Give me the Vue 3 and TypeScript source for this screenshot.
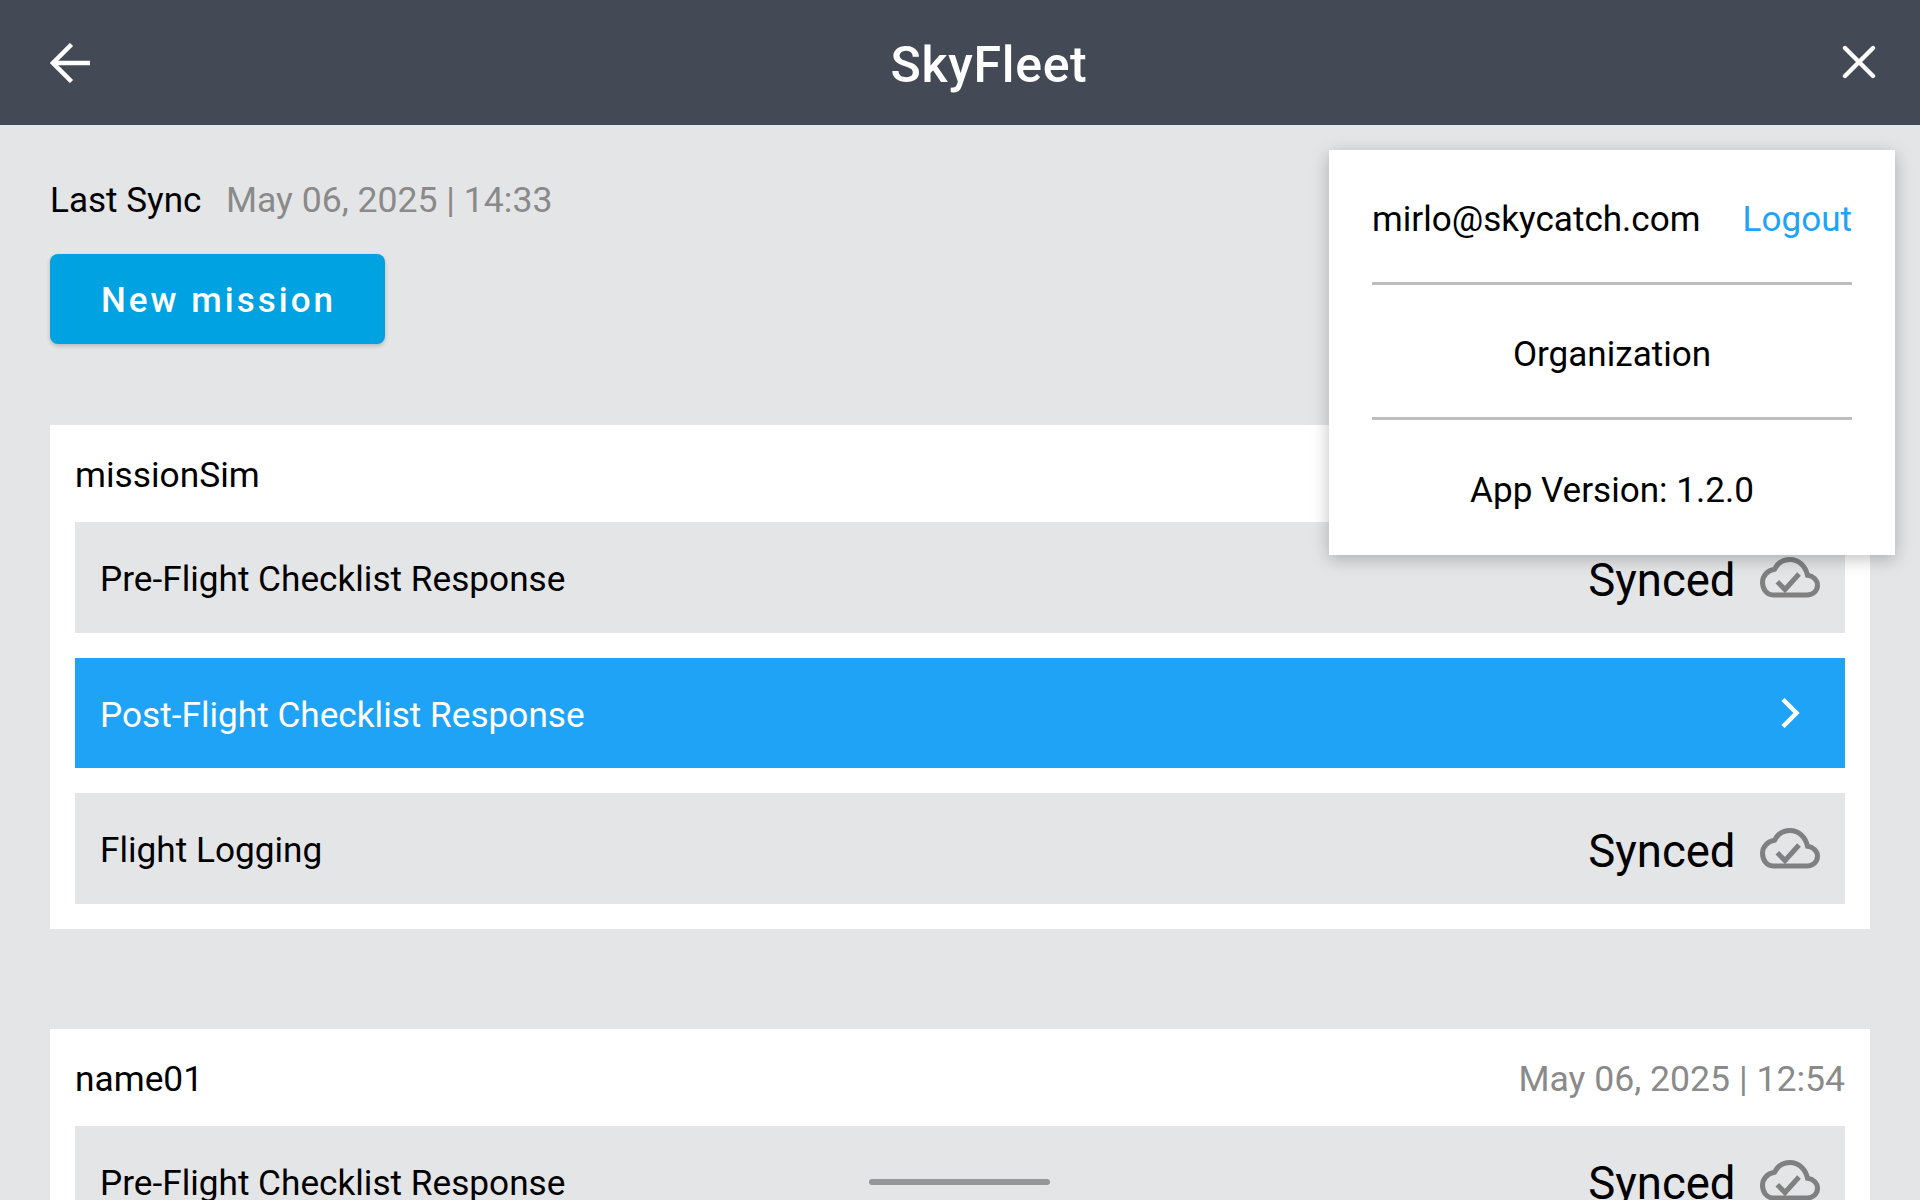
<script setup lang="ts">
interface Row { label: string; active?: boolean }
interface Mission { name: string; date?: string; rows: Row[] }
const missions: Mission[] = [
  { name: 'missionSim', rows: [
    { label: 'Pre-Flight Checklist Response' },
    { label: 'Post-Flight Checklist Response', active: true },
    { label: 'Flight Logging' },
  ] },
  { name: 'name01', date: 'May 06, 2025 | 12:54', rows: [
    { label: 'Pre-Flight Checklist Response' },
    { label: 'Post-Flight Checklist Response' },
  ] },
]
</script>

<template>
  <div class="app">
    <header class="bar">
      <svg class="back" viewBox="0 0 40 40" width="40" height="40" fill="none" stroke="#fff" stroke-width="4.5">
        <path d="M40 20H3" />
        <path d="M21.500 1.500L3 20L21.500 38.500" />
      </svg>
      <div class="title">SkyFleet</div>
      <svg class="close" viewBox="0 0 34 34" width="34" height="34" fill="none" stroke="#fff" stroke-width="4.400" stroke-linecap="round">
        <path d="M3 3L31 31M31 3L3 31" />
      </svg>
    </header>

    <main class="content">
      <div class="sync">
        <span class="sync-label">Last Sync</span>
        <span class="date">May 06, 2025 | 14:33</span>
      </div>
      <button class="new">New mission</button>

      <section v-for="m in missions" :key="m.name" class="card">
        <div class="card-head">
          <span>{{ m.name }}</span>
          <span v-if="m.date" class="date">{{ m.date }}</span>
        </div>
        <div class="rows">
          <div v-for="r in m.rows" :key="r.label" class="row" :class="{ active: r.active }">
            <span class="label">{{ r.label }}</span>
            <svg v-if="r.active" class="chev" viewBox="0 0 19 30" width="19" height="30" fill="none" stroke="#fff" stroke-width="4.500">
              <path d="M2 1.500L15.500 15L2 28.500" />
            </svg>
            <div v-else class="status">
              <span class="synced">Synced</span>
              <svg class="cloud" viewBox="0 0 60 41" width="60" height="41" fill="none" stroke="#808080" stroke-width="5">
                <path d="M13 38H47C53 38 57.500 33.800 57.500 28.300C57.500 22.800 53 18.800 47.500 18.300C45.500 9 38.500 2.500 30 2.500C23 2.500 17.500 6.500 14.500 12.300C7.500 13.300 2.500 18.800 2.500 25.300C2.500 32.300 7 38 13 38Z" />
                <path d="M17.300 24.700L25 32.500L39 17" />
              </svg>
            </div>
          </div>
        </div>
      </section>
    </main>

    <aside class="menu">
      <div class="menu-row between">
        <span>mirlo@skycatch.com</span>
        <span class="logout">Logout</span>
      </div>
      <div class="menu-row">Organization</div>
      <div class="menu-row">App Version: 1.2.0</div>
    </aside>

    <div class="handle"></div>
  </div>
</template>

<style>
html, body { margin: 0; background: #e4e5e7; }
</style>

<style scoped>
.app {
  position: relative;
  width: 1920px;
  height: 1200px;
  overflow: hidden;
  background: #e4e5e7;
  font-family: Roboto, "Liberation Sans", sans-serif;
  color: #000;
}
.bar {
  height: 125px;
  box-sizing: border-box;
  padding: 0 44px 0 50px;
  display: flex;
  align-items: center;
  background: #434955;
  color: #fff;
}
.back { margin-top: 1px; }
.close { margin-top: -1px; }
.title {
  flex: 1;
  margin-left: 46px;
  margin-top: 4px;
  text-align: center;
  font-size: 50px;
  font-weight: 500;
  letter-spacing: 0.7px;
}
.content { padding: 54.500px 50px 0; }
.sync {
  display: flex;
  gap: 24.500px;
  font-size: 35.100px;
  line-height: 40px;
}
.date {
  color: #8a8a8a;
  font-size: 35.600px;
}
.new {
  display: block;
  width: 335px;
  height: 90px;
  margin: 34.500px 0 81px;
  padding: 2px 0 0 2px;
  border: 0;
  border-radius: 8px;
  background: #00a2e2;
  color: #fff;
  font-family: inherit;
  font-size: 35px;
  font-weight: 500;
  letter-spacing: 3px;
  box-shadow: 0 2px 4px rgba(0, 0, 0, 0.2);
}
.card {
  background: #fff;
  margin-bottom: 100px;
  padding: 0 25px 25px;
}
.card-head {
  height: 97px;
  padding-top: 3px;
  box-sizing: border-box;
  display: flex;
  align-items: center;
  justify-content: space-between;
  font-size: 35.300px;
}
.rows {
  display: flex;
  flex-direction: column;
  gap: 25px;
}
.row {
  height: 110.500px;
  padding: 0 25px;
  display: flex;
  align-items: center;
  justify-content: space-between;
  background: #e4e5e7;
  font-size: 35.200px;
}
.row.active {
  background: #1fa3f6;
  color: #fff;
  padding-right: 45px;
}
.label { padding-top: 4px; }
.status {
  display: flex;
  align-items: center;
  gap: 24.500px;
}
.synced {
  font-size: 45.500px;
  padding-top: 6px;
}
.menu {
  position: absolute;
  top: 150px;
  left: 1329px;
  width: 566px;
  height: 405px;
  box-sizing: border-box;
  padding: 0 43px;
  background: #fff;
  box-shadow: 0 4px 16px rgba(0, 0, 0, 0.25);
  font-size: 35.100px;
  display: flex;
  flex-direction: column;
}
.menu-row {
  height: 136px;
  padding-top: 5px;
  display: flex;
  align-items: center;
  justify-content: center;
  border-bottom: 3px solid #bdbdbd;
  box-sizing: border-box;
}
.menu-row:last-child { border-bottom: 0; }
.between { justify-content: space-between; }
.logout { color: #1fa3f6; }
.handle {
  position: absolute;
  left: 869px;
  bottom: 15px;
  width: 181px;
  height: 6px;
  border-radius: 3px;
  background: #959595;
}
</style>
